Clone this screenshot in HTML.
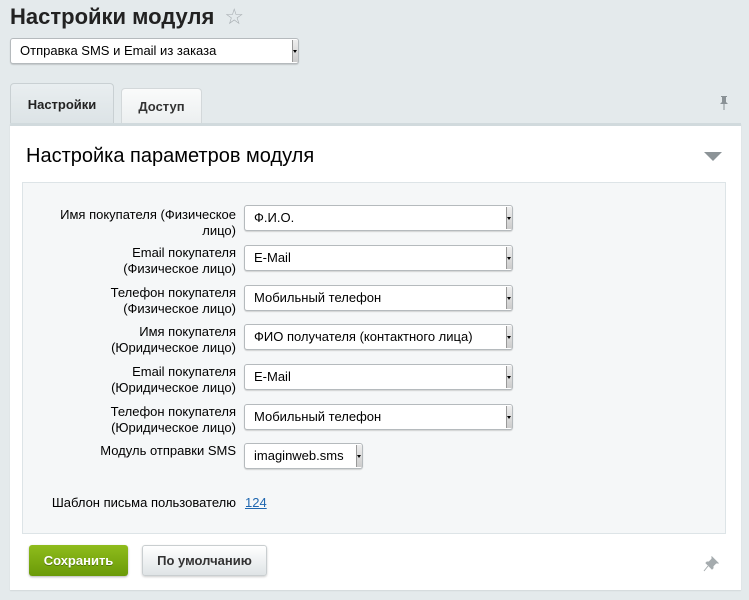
<!DOCTYPE html>
<html><head><meta charset="utf-8"><style>
*{margin:0;padding:0;box-sizing:border-box}
body{width:749px;height:600px;background:#e4eaec;font-family:"Liberation Sans",Arial,sans-serif;position:relative;overflow:hidden;color:#000}
.a{position:absolute}
h1{position:absolute;left:10px;top:4px;font-size:22px;font-weight:bold;color:#222}
.sel{position:absolute;background:#fff;border:1px solid #b5babd;border-radius:3px;box-shadow:0 1px 1px rgba(0,0,0,.15);font-size:13px;padding-left:9px;line-height:24px;height:26px;color:#000}
.sel:after{content:"";position:absolute;right:0;top:1px;bottom:1px;width:5px;background:linear-gradient(#eee,#ccc);border-left:1px solid #999}
.sel i{position:absolute;right:1px;top:11px;width:0;height:0;border-left:2px solid transparent;border-right:2px solid transparent;border-top:3px solid #000;z-index:2}
.lab{position:absolute;right:513px;width:194px;text-align:right;font-size:13px;line-height:16px;color:#000}
</style></head><body>
<h1>Настройки модуля <span style="color:#a9afb3;font-weight:normal;font-size:22px;margin-left:4px">☆</span></h1>
<div class="sel" style="left:10px;top:38px;width:289px">Отправка SMS и Email из заказа<i></i></div>
<div class="a" style="left:10px;top:83px;width:104px;height:41px;background:linear-gradient(#e9eef0,#dce3e6);border:1px solid #c9d0d3;border-bottom:none;border-radius:4px 4px 0 0;font-size:13px;font-weight:bold;line-height:42px;text-align:center;color:#222">Настройки</div>
<div class="a" style="left:121px;top:88px;width:81px;height:35px;background:linear-gradient(#fafbfb,#eceff0);border:1px solid #d3d8da;border-bottom:none;border-radius:4px 4px 0 0;font-size:13px;font-weight:bold;line-height:36px;text-align:center;color:#333">Доступ</div>
<div class="a" style="left:718px;top:95px;width:12px;height:16px;"><svg width="12" height="16"><path d="M3 1h6v1H8v5l2 2H2l2-2V2H3z M5.5 9h1v6h-1z" fill="#8a9296"/></svg></div>
<div class="a" style="left:10px;top:123px;width:731px;height:467px;background:#fff;border-top:3px solid #d1dadd;box-shadow:0 1px 1px rgba(0,0,0,.08)"></div>
<div class="a" style="left:26px;top:145px;font-size:20px;color:#000">Настройка параметров модуля</div>
<div class="a" style="left:704px;top:152px;width:0;height:0;border-left:9px solid transparent;border-right:9px solid transparent;border-top:9px solid #8c9397"></div>
<div class="a" style="left:22px;top:182px;width:704px;height:352px;background:#f5f7f8;border:1px solid #dde4e7"></div>

<div class="lab" style="top:207px">Имя покупателя (Физическое лицо)</div>
<div class="sel" style="left:244px;top:205px;width:269px">Ф.И.О.<i></i></div>
<div class="lab" style="top:245px">Email покупателя<br>(Физическое лицо)</div>
<div class="sel" style="left:244px;top:245px;width:269px">E-Mail<i></i></div>
<div class="lab" style="top:285px">Телефон покупателя<br>(Физическое лицо)</div>
<div class="sel" style="left:244px;top:285px;width:269px">Мобильный телефон<i></i></div>
<div class="lab" style="top:324px">Имя покупателя<br>(Юридическое лицо)</div>
<div class="sel" style="left:244px;top:324px;width:269px">ФИО получателя (контактного лица)<i></i></div>
<div class="lab" style="top:364px">Email покупателя<br>(Юридическое лицо)</div>
<div class="sel" style="left:244px;top:364px;width:269px">E-Mail<i></i></div>
<div class="lab" style="top:404px">Телефон покупателя<br>(Юридическое лицо)</div>
<div class="sel" style="left:244px;top:404px;width:269px">Мобильный телефон<i></i></div>
<div class="lab" style="top:443px">Модуль отправки SMS</div>
<div class="sel" style="left:244px;top:443px;width:119px">imaginweb.sms<i></i></div>
<div class="lab" style="top:495px">Шаблон письма пользователю</div>
<div class="a" style="left:245px;top:495px;font-size:13px;line-height:16px;color:#2067b0;text-decoration:underline">124</div>

<div class="a" style="left:29px;top:545px;width:99px;height:31px;background:linear-gradient(#8fbc1c,#6a9a08);border-radius:3px;box-shadow:0 1px 2px rgba(0,0,0,.3);color:#fff;font-weight:bold;font-size:13px;line-height:31px;text-align:center;text-shadow:0 1px 0 rgba(0,0,0,.3)">Сохранить</div>
<div class="a" style="left:142px;top:545px;width:125px;height:31px;background:linear-gradient(#fff,#dfe4e6);border:1px solid #c9ced0;border-radius:3px;box-shadow:0 1px 2px rgba(0,0,0,.2);color:#333;font-weight:bold;font-size:13px;line-height:29px;text-align:center">По умолчанию</div>
<div class="a" style="left:703px;top:556px"><svg width="16" height="16"><path d="M9 1l6 6-2 0-3 3 0 2-1 1-6-6 1-1 2 0 3-3z M5 10l-4 5" fill="#a5abae" stroke="#a5abae" stroke-width="1"/></svg></div>
</body></html>
